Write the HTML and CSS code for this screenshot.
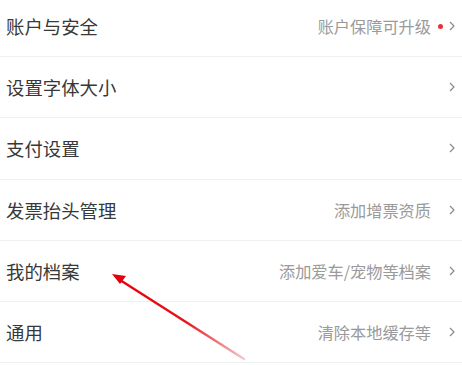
FILE: index.html
```html
<!DOCTYPE html>
<html lang="zh-CN">
<head>
    <meta charset="UTF-8">
    <meta name="viewport" content="width=device-width, initial-scale=1.0">
    <title>设置</title>
    <link rel="stylesheet" href="styles.css">
</head>
<body>
    <div class="settings">
        <a href="#" class="row">
            <span class="label">账户与安全</span>
            <span class="extra">账户保障可升级</span>
            <span class="dot on"></span>
            <svg class="chev" viewBox="0 0 6 10"><polyline points="1,1 5,5 1,9"/></svg>
        </a>
        <a href="#" class="row">
            <span class="label">设置字体大小</span>
            <span class="extra"></span>
            <span class="dot"></span>
            <svg class="chev" viewBox="0 0 6 10"><polyline points="1,1 5,5 1,9"/></svg>
        </a>
        <a href="#" class="row">
            <span class="label">支付设置</span>
            <span class="extra"></span>
            <span class="dot"></span>
            <svg class="chev" viewBox="0 0 6 10"><polyline points="1,1 5,5 1,9"/></svg>
        </a>
        <a href="#" class="row">
            <span class="label">发票抬头管理</span>
            <span class="extra">添加增票资质</span>
            <span class="dot"></span>
            <svg class="chev" viewBox="0 0 6 10"><polyline points="1,1 5,5 1,9"/></svg>
        </a>
        <a href="#" class="row">
            <span class="label">我的档案</span>
            <span class="extra">添加爱车/宠物等档案</span>
            <span class="dot"></span>
            <svg class="chev" viewBox="0 0 6 10"><polyline points="1,1 5,5 1,9"/></svg>
        </a>
        <a href="#" class="row">
            <span class="label">通用</span>
            <span class="extra">清除本地缓存等</span>
            <span class="dot"></span>
            <svg class="chev" viewBox="0 0 6 10"><polyline points="1,1 5,5 1,9"/></svg>
        </a>
    </div>

    <!-- annotation arrow drawn over the list -->
    <svg class="pointer" viewBox="0 0 462 365">
        <defs>
            <linearGradient id="fade" x1="113" y1="275" x2="244" y2="359" gradientUnits="userSpaceOnUse">
                <stop offset="0" stop-color="#e8000a"/>
                <stop offset="0.55" stop-color="#e8111a"/>
                <stop offset="1" stop-color="#f3c9cc"/>
            </linearGradient>
        </defs>
        <line x1="120" y1="280" x2="244" y2="359" stroke="url(#fade)" stroke-width="2.4" stroke-linecap="round"/>
        <polygon points="112,274 126,276 120,284" fill="#e5000b"/>
    </svg>
</body>
</html>
```

FILE: styles.css
```css
body {
    margin: 0;
    background: #fff;
    font-family: "Noto Sans CJK SC", "Noto Sans", sans-serif;
    overflow: hidden;
}
.settings {
    margin-top: -4px;
}
.row {
    display: flex;
    align-items: center;
    box-sizing: border-box;
    height: 61.2px;
    padding: 0 7px 0 6px;
    border-bottom: 1px solid #f0f0f0;
    text-decoration: none;
}
.row .label {
    flex: 1;
    font-size: 18.4px;
    color: #383838;
}
.row .extra {
    font-size: 16.2px;
    color: #9a9a9a;
}
.row .dot {
    width: 5px;
    height: 5px;
    margin: 0 6px 0 7px;
    border-radius: 50%;
}
.row .dot.on {
    background: #e8303a;
}
.chev {
    width: 6px;
    height: 10px;
    fill: none;
    stroke: #8a8a8a;
    stroke-width: 1.2;
}
.pointer {
    position: absolute;
    left: 0;
    top: 0;
    width: 462px;
    height: 365px;
    pointer-events: none;
}
```
